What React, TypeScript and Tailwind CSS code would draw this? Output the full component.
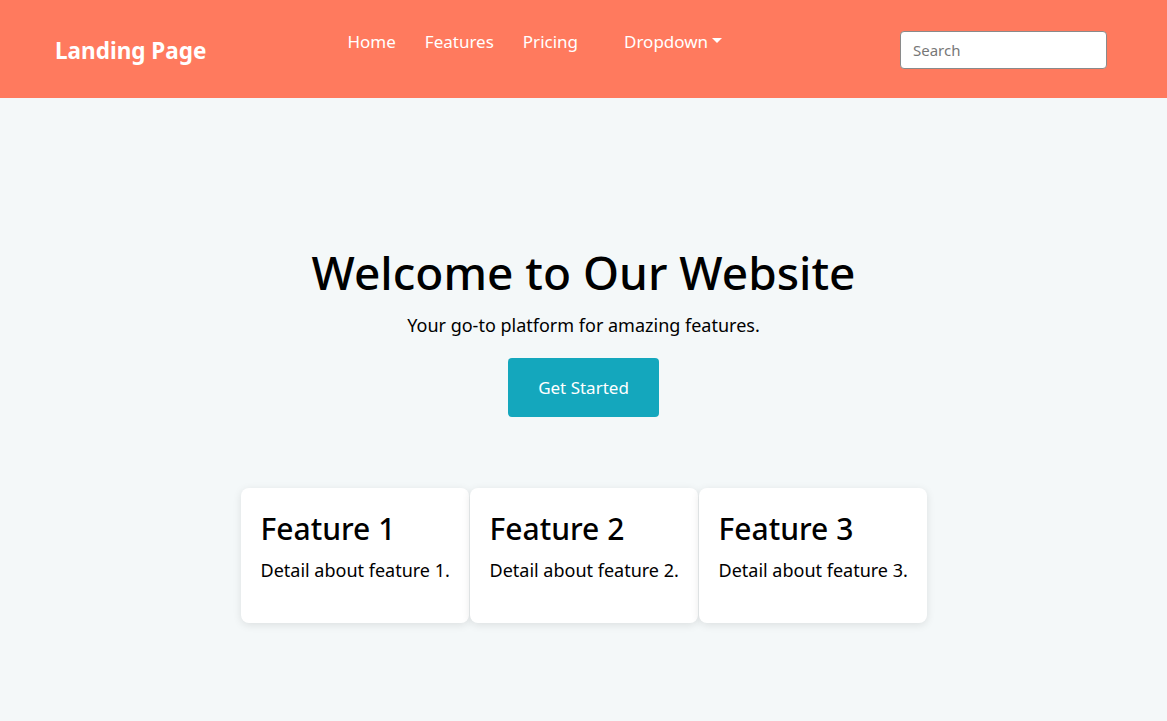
import { useState } from 'react';

const features = [
  { id: 1, title: 'Feature 1', detail: 'Detail about feature 1.' },
  { id: 2, title: 'Feature 2', detail: 'Detail about feature 2.' },
  { id: 3, title: 'Feature 3', detail: 'Detail about feature 3.' },
];

const links = ['Home', 'Features', 'Pricing'];

const App = () => {
  const [query, setQuery] = useState('');

  return (
    <div className="min-h-screen bg-[#f4f8f9] text-black font-['Noto_Sans',sans-serif]">
      <nav className="h-[98px] bg-[#ff7a5e] flex items-center pl-[55px] pr-[60px]">
        <a href="#" className="text-white font-bold text-[22.5px] leading-none mt-[4px]">
          Landing Page
        </a>
        <ul className="flex items-center gap-[29px] ml-[141px] mb-[16px] text-white text-[17px] leading-none">
          {links.map((link) => (
            <li key={link}>
              <a href="#">{link}</a>
            </li>
          ))}
          <li className="ml-[17px] flex items-center">
            <a href="#">Dropdown</a>
            <span className="ml-[4px] mt-[-2px] w-0 h-0 border-l-[5px] border-r-[5px] border-t-[5px] border-l-transparent border-r-transparent border-t-white" />
          </li>
        </ul>
        <input
          type="text"
          value={query}
          onChange={(e) => setQuery(e.target.value)}
          placeholder="Search"
          className="ml-auto mt-[2px] w-[207px] h-[38px] rounded-[4px] border border-[#8a8a8a] bg-white px-[12px] text-[15px] text-gray-700 placeholder:text-[#777] outline-none"
        />
      </nav>

      <section className="flex flex-col items-center pt-[151px]">
        <h1 className="text-[46px] font-medium leading-none">Welcome to Our Website</h1>
        <p className="mt-[17px] text-[18px]">Your go-to platform for amazing features.</p>
        <button className="mt-[19px] w-[151px] h-[59px] rounded-[4px] bg-[#14a7bd] text-white text-[17px]">
          Get Started
        </button>
      </section>

      <section className="flex justify-center gap-[1px] mt-[71px]">
        {features.map((f) => (
          <div
            key={f.id}
            className="w-[228px] h-[135px] bg-white rounded-[8px] shadow-[0_2px_8px_rgba(0,0,0,0.1)] pl-[20px] pt-[26px]"
          >
            <h2 className="text-[30px] font-medium leading-none">{f.title}</h2>
            <p className="mt-[13px] text-[18px] whitespace-nowrap">{f.detail}</p>
          </div>
        ))}
      </section>
    </div>
  );
};

export default App;
